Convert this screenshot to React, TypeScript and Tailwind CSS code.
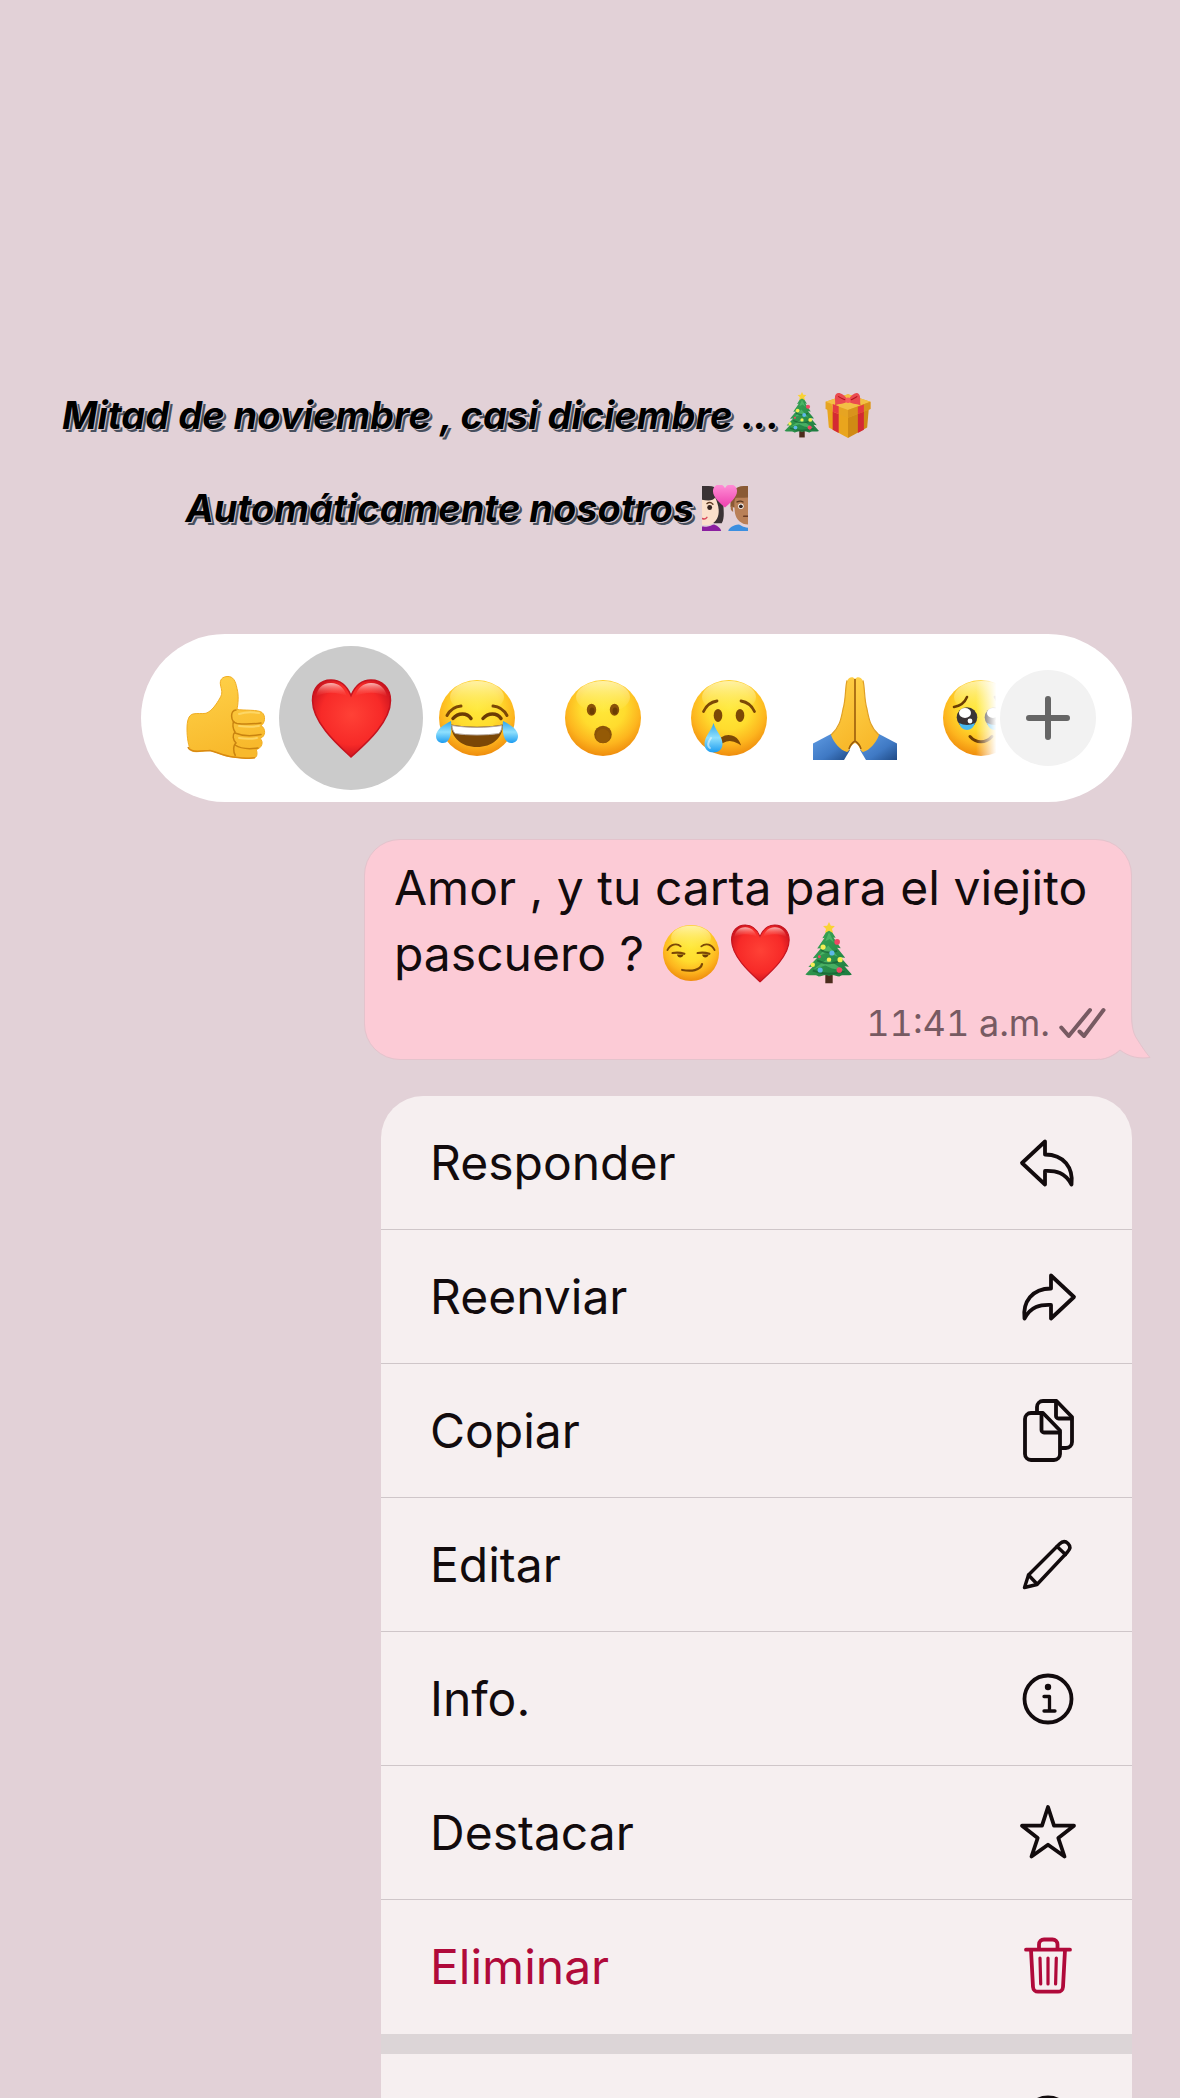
import type { ReactNode } from 'react'
import { clsx } from 'clsx'

interface DrawingProps {
  className?: string
}

interface Reaction {
  label: string
  icon: (props: DrawingProps) => ReactNode
  selected?: boolean
}

interface MenuItem {
  label: string
  icon: ReactNode
  danger?: boolean
}

// Shared gradients for all the emoji drawings
const Gradients = () => (
  <svg className="absolute size-0" aria-hidden="true">
    <defs>
      <radialGradient id="face" cx="0.5" cy="0.36" r="0.65">
        <stop offset="0" stopColor="#ffe93a" />
        <stop offset="0.45" stopColor="#ffdc2e" />
        <stop offset="0.75" stopColor="#fdb51e" />
        <stop offset="1" stopColor="#ee8a0c" />
      </radialGradient>
      <linearGradient id="shine" x1="0" y1="0" x2="0" y2="1">
        <stop offset="0" stopColor="#fffbd0" stopOpacity="0.75" />
        <stop offset="1" stopColor="#fff27a" stopOpacity="0" />
      </linearGradient>
      <radialGradient id="heart" cx="0.5" cy="0.45" r="0.6">
        <stop offset="0" stopColor="#ff4136" />
        <stop offset="0.65" stopColor="#f72a28" />
        <stop offset="1" stopColor="#c4101d" />
      </radialGradient>
      <linearGradient id="heartShine" x1="0" y1="0" x2="0" y2="1">
        <stop offset="0" stopColor="#ffd0cc" stopOpacity="0.85" />
        <stop offset="1" stopColor="#ff4a40" stopOpacity="0" />
      </linearGradient>
      <linearGradient id="tear" x1="0" y1="0" x2="0" y2="1">
        <stop offset="0" stopColor="#2ea4ec" />
        <stop offset="0.5" stopColor="#8fe0fd" />
        <stop offset="1" stopColor="#1c9cf0" />
      </linearGradient>
      <linearGradient id="skin" x1="0" y1="0" x2="0.3" y2="1">
        <stop offset="0" stopColor="#ffd24a" />
        <stop offset="1" stopColor="#f8b92c" />
      </linearGradient>
      <linearGradient id="sleeve" x1="0" y1="0" x2="1" y2="1">
        <stop offset="0" stopColor="#5f9be3" />
        <stop offset="0.6" stopColor="#3f79c4" />
        <stop offset="1" stopColor="#1f4a86" />
      </linearGradient>
      <linearGradient id="pinkHeart" x1="0" y1="0" x2="0" y2="1">
        <stop offset="0" stopColor="#ff8fd6" />
        <stop offset="1" stopColor="#ee3fae" />
      </linearGradient>
      <linearGradient id="pine" x1="0" y1="0" x2="1" y2="1">
        <stop offset="0" stopColor="#3fae5b" />
        <stop offset="1" stopColor="#1c7a3f" />
      </linearGradient>
    </defs>
  </svg>
)

const Face = ({ className, children }: DrawingProps & { children: ReactNode }) => (
  <svg viewBox="0 0 84 84" className={className} fill="none" strokeLinecap="round" aria-hidden="true">
    <circle cx="42" cy="42" r="38" fill="url(#face)" />
    <ellipse cx="42" cy="21" rx="27" ry="16" fill="url(#shine)" />
    {children}
  </svg>
)

const ThumbsUp = ({ className }: DrawingProps) => (
  <svg viewBox="0 0 84 84" className={className} aria-hidden="true">
    <path
      d="M45 .5C39 .5 36.500 4 37.500 9c1 5 2.500 8-.5 13-3.500 6-8 13-14 15.300C19 38 14 37 10 38c-4.500 1-6 7-6 15 0 9 1.500 18 4 21 3 3.500 12 .5 19 .5 7 1.500 13 5.500 23 6.500 9 1 18 2 22 .5 3-1 2-7 1-8 6-1 8-8 4-11 6-2 6-10 1-13 4-2 5-10 1-13-3-3-19-2-25-3 1-5 2-14 0-21C52.500 4.500 50 .5 45 .5Z"
      fill="url(#skin)"
      stroke="#f0ad22"
    />
    <path d="M5 71c2 6 12 4 22 3.500 7 1.500 13 5.500 23 6.500 8 1 16 2 22 .8" fill="none" stroke="#d98a12" strokeWidth="1.500" />
    <path d="M51 45c-2 3-1 8 1 11-3 3-2 8 1 11-3 2-3 9-.5 13" fill="none" stroke="#c98310" strokeWidth="1.500" />
    <g fill="none" stroke="#c98310" strokeWidth="1.500" strokeLinecap="round">
      <path d="M53 34c-6 0-6 12 1 13.500 8 1 17 .5 24-.5" />
      <path d="M52 57c7 3 18 3 26 1.500" />
      <path d="M52 69c6 4 16 4 23 3" />
    </g>
    <g fill="none" stroke="#ffe07a" strokeWidth="2" strokeLinecap="round" opacity="0.7">
      <path d="M56 38c6-2 14-2 20-1" />
      <path d="M56 50c7 1 14 1 20 0" />
      <path d="M56 62c6 1 13 1 18 0" />
    </g>
  </svg>
)

const Heart = ({ className }: DrawingProps) => (
  <svg viewBox="0 0 84 84" className={className} aria-hidden="true">
    <path
      d="M42 81C35 74 3.500 49 3.500 24.500 3.500 12 11 4 22 4c9 0 16 6 20 15.500C46 10 53 4 62 4c11 0 19.500 8 19.500 20.500C81.500 49 49 74 42 81Z"
      fill="url(#heart)"
      stroke="#c5141f"
      strokeWidth="1.500"
    />
    <path d="M22 7c-9 0-14 6-15 14 8-6 22-5 31-1C35 12 30 7 22 7Z" fill="url(#heartShine)" />
    <path d="M62 7c9 0 15 6 16 14-8-6-23-5-32-1C49 12 54 7 62 7Z" fill="url(#heartShine)" />
  </svg>
)

const Joy = ({ className }: DrawingProps) => (
  <Face className={className}>
    <path d="M12 39.500C15 34 20 30.500 26 30M72 39.500C69 34 64 30.500 58 30" stroke="#7c4806" strokeWidth="3" />
    <path d="M18 42.500c5-6 14-6 18 0M48 42.500c5-6 14-6 18 0" stroke="#6b3c04" strokeWidth="3.500" />
    <path d="M16 48.500c17 3 35 3 52 0C68 62 57 71 42 71S16 62 16 48.500Z" fill="#7b4706" />
    <path d="M17 49.500c16 2.500 34 2.500 50 0 0 3-1 6-3 8-13 2-31 2-44 0-2-2-3-5-3-8Z" fill="#fff" stroke="#b5a79b" />
    <path d="M16 45C10 48 1 53 1 60c0 4.500 3 7 7 7 8 0 9-13 8-22Z" fill="url(#tear)" />
    <path d="M68 45c6 3 15 8 15 15 0 4.500-3 7-7 7-8 0-9-13-8-22Z" fill="url(#tear)" />
  </Face>
)

const Surprised = ({ className }: DrawingProps) => (
  <Face className={className}>
    <ellipse cx="30.500" cy="33.700" rx="4.700" ry="6" fill="#8a5208" />
    <ellipse cx="53.500" cy="33.700" rx="4.700" ry="6" fill="#8a5208" />
    <ellipse cx="31" cy="35" rx="2.500" ry="3.500" fill="#6b3c04" />
    <ellipse cx="54" cy="35" rx="2.500" ry="3.500" fill="#6b3c04" />
    <circle cx="42" cy="58.500" r="8.800" fill="#8a5208" />
    <circle cx="42" cy="60" r="7" fill="#945a06" />
  </Face>
)

const Crying = ({ className }: DrawingProps) => (
  <Face className={className}>
    <path d="M16.500 35.500C19 30 24 26 30 25M67.500 35.500C65 30 60 26 54 25" stroke="#7c4806" strokeWidth="2.800" />
    <ellipse cx="31" cy="39.400" rx="4.300" ry="6.500" fill="#7c4806" />
    <ellipse cx="53" cy="39.400" rx="4.300" ry="6.500" fill="#7c4806" />
    <path d="M35 62c6-4 14-2 17 5-5-3-11-4-16-1Z" fill="#7c4806" stroke="#7c4806" strokeWidth="2" />
    <path d="M26.500 47c-2 8-9 13-9 21 0 5 4 8.500 9 8.500s9-3.500 9-8.500c0-8-7-13-9-21Z" fill="url(#tear)" />
    <path d="M24 62c-3 4-4 8-1 10" stroke="#fff" strokeWidth="2" opacity="0.5" />
  </Face>
)

const Pray = ({ className }: DrawingProps) => (
  <svg viewBox="0 0 84 84" className={className} aria-hidden="true">
    <path d="M18 58 0 67.500V84h31l6-10Z" fill="url(#sleeve)" />
    <path d="m66 58 18 9.500V84H53l-6-10Z" fill="url(#sleeve)" />
    <path d="M18 59c8-6 10-15 12-26 3-10 2-22 4.500-29C36 1 40 0 42 3v64c-5 2-5 8-8 9-7-2-13-9-16-17Z" fill="url(#skin)" />
    <path d="M66 59c-8-6-10-15-12-26-3-10-2-22-4.500-29C48 1 44 0 42 3v64c5 2 5 8 8 9 7-2 13-9 16-17Z" fill="url(#skin)" />
    <path d="M42 3v62c-3 2-5 4-6 8M42 65c3 2 5 4 6 8" fill="none" stroke="#9c5d0c" strokeWidth="1.600" />
    <path d="M34 4.500C32 12 33 23 30 33c-2 11-4 19-12 26M50 4.500C52 12 51 23 54 33c2 11 4 19 12 26" fill="none" stroke="#e0a024" strokeWidth="1.200" />
  </svg>
)

const HoldingTears = ({ className }: DrawingProps) => (
  <Face className={className}>
    <path d="M15 31c6-1 11-5 13-10M69 31c-6-1-11-5-13-10" stroke="#6b3c04" strokeWidth="2.500" />
    {[28, 56].map((cx) => (
      <g key={cx}>
        <circle cx={cx} cy="41.500" r="10.300" fill="#3a3436" />
        <path d={`M${cx - 8} 47q8 4 16 0-2 7-8 7t-8-7Z`} fill="#48b9f0" />
        <ellipse cx={cx - 2} cy="37" rx="6" ry="5" fill="#fff" />
        <circle cx={cx + 3} cy="45" r="2.400" fill="#fff" />
      </g>
    ))}
    <path d="M31 60.500c6 7 16 7 22 0" stroke="#6b3c04" strokeWidth="3" />
  </Face>
)

const Smirk = ({ className }: DrawingProps) => (
  <Face className={className}>
    <path d="M10 38c4-8 13-10 18-5M56 33c6-5 14-3 18 5" stroke="#7c4806" strokeWidth="2.500" />
    <path d="M17 42c5-1 10-1 16 1M51 42c5-1 10-1 16 1" stroke="#7c4806" strokeWidth="3" />
    <path d="M23 44c1 6 8 5 9 0ZM57 44c1 6 8 5 9 0Z" fill="#6b3c04" />
    <path d="M30 65c12 2 25 1 27-8" stroke="#7c4806" strokeWidth="3" />
  </Face>
)

const Tree = ({ className }: DrawingProps) => (
  <svg viewBox="0 0 84 84" className={className} aria-hidden="true">
    <path d="M37 70h10v13H37z" fill="#4b2c1c" />
    <path d="M42 7 33 22l3-.5L26 36l5-.5L20 49l6-.500L14 61l6-.5L10 71c8 3 14-1 18 3 5 0 8-4 14-1 6-3 9 1 14 1 4-4 10 0 17-3L63 60l6 .5L58 48l6 .5L53 35l5 .5L48 21l3 .5Z" fill="url(#pine)" />
    <path d="m42 14-5 12 6-3 6 5ZM41 32 28 46l12-5 14 6ZM40 50 21 64l16-5 9 4 17 3Z" fill="#59c172" opacity="0.65" />
    <path d="M31 38c6 4 14 4 22 1M26 52c9 5 20 5 31 1M20 66c13 5 29 5 43 1" fill="none" stroke="#145e31" strokeWidth="2.500" opacity="0.65" />
    <path d="m42 0 2.500 5 5.500.5-4 4 1.500 5.500-5.500-3-5.500 3L38 9.500l-4-4 5.500-.5Z" fill="#f9d235" />
    <g fill="#f4ee55">
      <circle cx="34" cy="34" r="3.500" />
      <circle cx="57" cy="51" r="3.500" />
      <circle cx="42" cy="51" r="3" />
      <circle cx="20" cy="58" r="3" />
    </g>
    <g fill="#ef4864">
      <circle cx="53" cy="27" r="3.800" />
      <circle cx="56" cy="65" r="3.800" />
      <circle cx="29" cy="47" r="2" />
    </g>
    <g fill="#5db8e8">
      <circle cx="46" cy="42" r="3.500" />
      <circle cx="30" cy="65" r="3.500" />
    </g>
  </svg>
)

const Gift = ({ className }: DrawingProps) => (
  <svg viewBox="0 0 84 84" className={className} aria-hidden="true">
    <path d="m4 30 38 13v41L7 65Z" fill="#e9a51d" />
    <path d="m80 30-38 13v41l35-19Z" fill="#d08a14" />
    <path d="M1 18 42 4l41 14v13L42 47 1 31Z" fill="#e6a422" />
    <path d="M1 18 42 4l41 14-41 15Z" fill="#f3bf45" />
    <path d="M42 33v14l41-16V18Z" fill="#d9931c" />
    <path d="m12 22 12 4v14l-10-4Z" fill="#f3bf45" />
    <path d="m14 36 11 4v35l-11-6ZM60 40l11-4v33l-11 6Z" fill="#d42a33" />
    <path d="m14 22 11 4v14l-11-4ZM60 27l11-4v13l-11 4Z" fill="#e63a40" />
    <path d="M42 15C34 3 24-1 20 4c-4 4 0 16-2 20 8-3 18-1 24-9ZM42 15C50 3 58-1 62 4c4 4 1 15 3 20-8-3-18-1-23-9Z" fill="#ea4a4f" />
    <path d="M24 8c5 3 10 6 16 7M59 8c-5 3-9 6-15 7" fill="none" stroke="#b3141f" strokeWidth="2" />
    <circle cx="42" cy="15" r="5" fill="#f75a5c" />
  </svg>
)

const Couple = ({ className }: DrawingProps) => (
  <svg viewBox="0 0 84 84" className={className} aria-hidden="true">
    <path d="M0 2h12c17 0 27 12 27 30 0 14 3 28-3 38H22L0 60Z" fill="#3a3234" />
    <path d="M0 27c11 2 21 2 24-4 4 9 8 19 6 31-2 11-11 19-19 19H0Z" fill="#fbe0cb" />
    <path d="M0 76c14 1 14-2 22-4 8 3 12 7 13 12H0Z" fill="#8b1fa0" />
    <path d="M84 2H76C60 2 52 14 52 28v12l32 4Z" fill="#8a5a34" />
    <path d="M84 23c-9 1-18 0-23 1-3 7-2 16-1 26 2 13 12 22 24 22Z" fill="#b98057" />
    <path d="M56 38c-5-1-5 9 1 11Z" fill="#a56d44" />
    <path d="M84 78c-10-1-12-5-17-6-10 1-18 6-19 12h36Z" fill="#3b8fe0" />
    <g fill="none" stroke="#5b3820" strokeWidth="2.500" strokeLinecap="round">
      <path d="M9 34c4-3 8-2 11 1M64 31c4-2 8-2 11 0" />
      <path d="M0 61c4 2 7 1 9-2" stroke="#d8475a" />
      <path d="M76 57h8" stroke="#6b3b23" />
    </g>
    <circle cx="14" cy="41" r="4.500" fill="#33231f" />
    <circle cx="71" cy="39" r="5" fill="#fff" />
    <circle cx="71" cy="39" r="3.500" fill="#33231f" />
    <path d="M42 41C34 34 20 23 20 11 20 3 26-1 32-1c5 0 8 3 10 7 2-4 5-7 10-7 6 0 12 4 12 12 0 12-14 23-22 30Z" fill="url(#pinkHeart)" />
  </svg>
)

const MenuIcon = ({ children }: { children: ReactNode }) => (
  <svg
    viewBox="0 0 64 64"
    className="size-16 shrink-0"
    fill="none"
    stroke="currentColor"
    strokeWidth="3.800"
    strokeLinecap="round"
    strokeLinejoin="round"
    aria-hidden="true"
  >
    {children}
  </svg>
)

const reactions: Reaction[] = [
  { label: 'Me gusta', icon: ThumbsUp },
  { label: 'Corazón', icon: Heart, selected: true },
  { label: 'Risa', icon: Joy },
  { label: 'Sorpresa', icon: Surprised },
  { label: 'Tristeza', icon: Crying },
  { label: 'Gracias', icon: Pray },
  { label: 'Emoción', icon: HoldingTears }
]

const menuItems: MenuItem[] = [
  {
    label: 'Responder',
    icon: <path d="M29 10.500 6 32l23 21.500V40c11-.5 20 1.500 26.500 13.500C57.500 37 48 23.500 29 23.500Z" />
  },
  {
    label: 'Reenviar',
    icon: <path d="M35 10.500 58 32 35 53.500V40c-11-.5-20 1.500-26.500 13.500C6.500 37 16 23.500 35 23.500Z" />
  },
  {
    label: 'Copiar',
    icon: (
      <>
        <path d="M15 14h12l17 17.500V55a6 6 0 0 1-6 6H15a6 6 0 0 1-6-6V20a6 6 0 0 1 6-6Z" />
        <path d="M25.500 14.500V31a2.500 2.500 0 0 0 2.500 2.500h15.500" />
        <path d="M21 13V8a6 6 0 0 1 6-6h13.500L56 18v25a6 6 0 0 1-6 6h-5" />
        <path d="M40 2.500V17a2.500 2.500 0 0 0 2.500 2.500H55.500" />
      </>
    )
  },
  {
    label: 'Editar',
    icon: (
      <g strokeWidth="3.400">
        <path d="M8.500 54.500 12.500 42 43.500 11c3-3 6-3 8.500-.5s2.500 5.500-.5 8.500L21 51.500Z" />
        <path d="m12.500 42 8.500 9M41 13.500l8.500 8" />
      </g>
    )
  },
  {
    label: 'Info.',
    icon: (
      <>
        <circle cx="32" cy="32" r="23.500" />
        <circle cx="32" cy="20" r="3.200" fill="currentColor" stroke="none" />
        <path d="M28 29.500h5.500v14.500M28 44h11" strokeWidth="3.300" />
      </>
    )
  },
  {
    label: 'Destacar',
    icon: <path d="m32 6 6 18.700h20L42.300 37l6.200 18.500L32 43.700 15.500 55.500 21.700 37 6 24.700h20Z" />
  },
  {
    label: 'Eliminar',
    danger: true,
    icon: (
      <>
        <path d="M10 14.700h44M23 14V9.500a5 5 0 0 1 5-5h8.500a5 5 0 0 1 5 5V14" />
        <path d="m15 15 2 37a5 5 0 0 0 5 4.700h20a5 5 0 0 0 5-4.700l2-37" />
        <path d="m24 23 .7 26M32 23v26M40.300 23l-.7 26" strokeWidth="3.200" />
      </>
    )
  }
]

const ReactionBar = () => (
  <div className="ml-[141px] mt-[102px] flex h-[168px] shrink-0 items-center rounded-full bg-white pr-9">
    <div className="relative min-w-0 flex-1 overflow-hidden rounded-l-full pl-[21px]">
      <div className="flex h-[168px] items-center">
        {reactions.map(({ label, icon: Icon, selected }) => (
          <button
            key={label}
            type="button"
            aria-label={label}
            className={clsx(
              '-mx-[9px] flex size-36 shrink-0 items-center justify-center rounded-full',
              selected && 'bg-[#cbcbcb]'
            )}
          >
            <Icon className="size-[84px]" />
          </button>
        ))}
      </div>
      <div className="absolute inset-y-0 right-0 w-6 bg-gradient-to-r from-transparent to-white to-85%" />
    </div>
    <button
      type="button"
      aria-label="Más reacciones"
      className="flex size-24 shrink-0 items-center justify-center rounded-full bg-[#f2f2f2] text-[#666]"
    >
      <svg viewBox="0 0 44 44" className="size-11" stroke="currentColor" strokeWidth="6" strokeLinecap="round" aria-hidden="true">
        <path d="M22 3v38M3 22h38" />
      </svg>
    </button>
  </div>
)

const Message = () => (
  <div className="relative ml-[364px] mt-[37px] shrink-0 rounded-[36px] border border-[#e3c3cc] bg-[#fccbd6] px-[29px] pt-[15px]">
    <p className="text-[48px] leading-[66px] text-[#120b0d]">
      Amor , y tu carta para el viejito
      <br />
      pascuero ?{' '}
      <Smirk className="ml-[2px] inline size-[62px] align-[-13px]" />
      <Heart className="ml-[7px] inline size-[62px] align-[-13px]" />
      <Tree className="ml-[7px] inline size-[62px] align-[-13px]" />
    </p>
    <div className="-mr-1 flex h-[72px] items-center justify-end gap-2 text-[#775a62]">
      <span className="text-[36px] leading-10 tabular-nums">11:41 a.m.</span>
      <svg viewBox="0 0 48 34" className="h-[34px] w-12" fill="none" stroke="currentColor" strokeWidth="4" strokeLinecap="round" strokeLinejoin="round" aria-label="Entregado">
        <path d="m3.300 21.500 7.400 8.500L32 4M21.500 25.500l4.500 4.500L45.500 4" />
      </svg>
    </div>
    <svg viewBox="0 0 56 60" className="absolute -bottom-px -right-[21px] h-[60px] w-14" fill="none" aria-hidden="true">
      <path d="M35 8c0 14 1 24 6 31 5 8 9 14 13 18.500-11 1.500-21-.5-30-7.500-6 5-12 8-20 9V20Z" fill="#fccbd6" />
      <path d="M35.500 8c0 14 .5 24 5.500 31 5 8 9 14 13 18.500-11 1.500-21-.5-30-7.500-6 5-12 8.500-20 9.500" stroke="#e3c3cc" />
    </svg>
  </div>
)

const ContextMenu = () => (
  <div className="ml-[381px] mt-9 shrink-0 overflow-hidden rounded-t-[42px] bg-[#f6eff0] text-[48px] leading-[60px] text-[#120b0d]">
    {menuItems.map((item) => (
      <button
        key={item.label}
        type="button"
        className={clsx(
          'flex h-[134px] w-full items-center justify-between border-b border-[#cfc6c9] pl-[49px] pr-[52px] text-left last:border-b-0',
          item.danger && 'text-[#b00a3a]'
        )}
      >
        <span>{item.label}</span>
        <MenuIcon>{item.icon}</MenuIcon>
      </button>
    ))}
  </div>
)

export default function App() {
  return (
    <main className="flex h-screen flex-col overflow-hidden bg-[#e2d1d7] pr-12 font-['Inter','Liberation_Sans',sans-serif]">
      <Gradients />

      <header className="flex shrink-0 flex-col items-center gap-[45px] self-start pl-[62px] pt-[391px] text-[38px] font-bold italic leading-[48px] text-black [text-shadow:1px_1px_0_#d5c8d0,3px_3px_0_#48505e]">
        <h1 className="flex items-center whitespace-nowrap">
          Mitad de noviembre , casi diciembre ...
          <Tree className="size-[46px]" />
          <Gift className="size-[46px]" />
        </h1>
        <p className="flex items-center gap-2 whitespace-nowrap">
          Automáticamente nosotros
          <Couple className="size-[46px]" />
        </p>
      </header>

      <ReactionBar />
      <Message />
      <ContextMenu />

      <div className="ml-[381px] h-5 shrink-0 bg-[#dcd5d7]" />
      <button
        type="button"
        aria-label="Más opciones"
        className="ml-[381px] flex h-[134px] shrink-0 items-center justify-end bg-[#f6eff0] pr-[52px] text-[#120b0d]"
      >
        <MenuIcon>
          <circle cx="32" cy="32" r="23.500" />
        </MenuIcon>
      </button>
    </main>
  )
}
